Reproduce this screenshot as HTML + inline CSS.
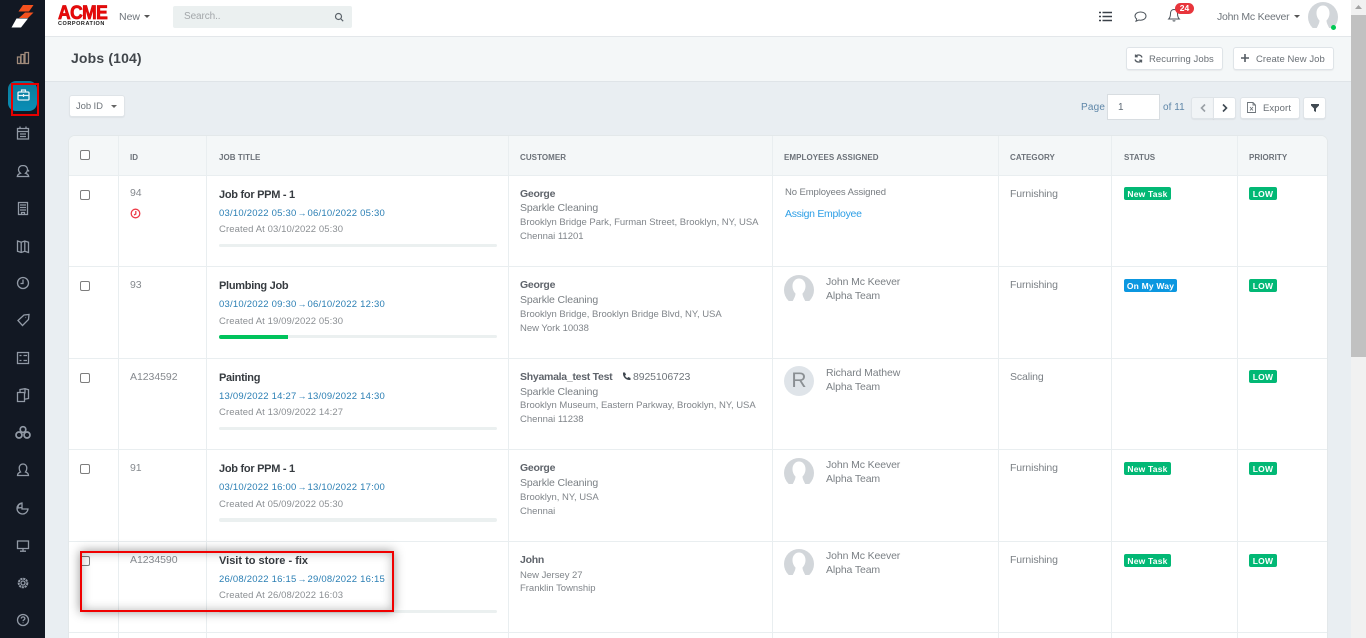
<!DOCTYPE html>
<html lang="en">
<head>
<meta charset="utf-8">
<title>Jobs</title>
<style>
html,body{margin:0;padding:0;width:1366px;height:638px;overflow:hidden;background:#e9eef2;font-family:"Liberation Sans",sans-serif}
#p{position:relative;width:1366px;height:638px;overflow:hidden}
.b{position:absolute}
.t{position:absolute;white-space:nowrap;line-height:14px;font-size:10.5px;letter-spacing:0;color:#7b8085}
.h{font-size:8px;font-weight:bold;letter-spacing:.06px;color:#6c7279}
.id{font-size:10.5px;letter-spacing:-.05px;color:#85898e}
.ti{font-size:11px;font-weight:bold;letter-spacing:-.28px;color:#363b40;margin-top:1px}
.da{font-size:9.5px;letter-spacing:.22px;color:#2b7fb4;margin-top:1px}
.ar{display:inline-block;width:11px;text-align:center;font-style:normal;font-size:9px;letter-spacing:0}
.cr{font-size:9.5px;letter-spacing:.1px;color:#8b8f93;margin-top:1px}
.na{font-size:10.5px;font-weight:bold;letter-spacing:-.27px;color:#5f646b}
.ad{font-size:9.5px;letter-spacing:-.02px;color:#80858a;margin-top:1px}
.co{font-size:10.5px;letter-spacing:-.12px;color:#7b8085}
.bd{position:absolute;height:13px;border-radius:2px;color:#fff;font-size:8.5px;font-weight:bold;line-height:14px;text-align:center;letter-spacing:.2px}
.g{background:#02b875}.bl{background:#0b97e0}
.cb{position:absolute;width:8px;height:8px;border:1px solid #7d7d7d;border-radius:2px;background:#fff}
.vl{position:absolute;top:136px;bottom:0;width:1px;background:#e9eef0}
.hl{position:absolute;left:69px;width:1258px;height:1px;background:#e9eef0}
.pb{position:absolute;left:219px;width:278px;height:3px;background:#ebf0f0;border-radius:2px}
.btn{position:absolute;background:#fff;border:1px solid #dfe4e8;border-radius:3px;box-sizing:border-box;box-shadow:0 1px 1px rgba(0,0,0,.05)}
svg{position:absolute;overflow:visible}
.ic{fill:none;stroke:#929aa6;stroke-width:1.3}
</style>
</head>
<body>
<div id="p">
<!-- main surfaces -->
<div class="b" style="left:45px;top:36px;width:1306px;height:46px;background:#f4f7f8;border-bottom:1px solid #dfe4e8;border-top:1px solid #e3e7ea;box-sizing:border-box"></div>
<div class="b" style="left:45px;top:0;width:1306px;height:37px;background:#fff;border-bottom:1px solid #e3e7ea;box-sizing:border-box"></div>

<!-- table -->
<div class="b" style="left:69px;top:136px;width:1258px;height:510px;background:#fff;border-radius:6px 6px 0 0;box-shadow:0 0 0 1px #e3e8ea"></div>
<div class="b" style="left:69px;top:136px;width:1258px;height:39px;background:#f4f7f8;border-radius:6px 6px 0 0"></div>
<div class="vl" style="left:118px"></div><div class="vl" style="left:206px"></div><div class="vl" style="left:508px"></div><div class="vl" style="left:772px"></div><div class="vl" style="left:998px"></div><div class="vl" style="left:1111px"></div><div class="vl" style="left:1237px"></div>
<div class="hl" style="top:175px"></div><div class="hl" style="top:266px"></div><div class="hl" style="top:358px"></div><div class="hl" style="top:449px"></div><div class="hl" style="top:541px"></div><div class="hl" style="top:632px"></div>

<!-- sidebar -->
<div class="b" style="left:0;top:0;width:45px;height:638px;background:#121823"></div>
<svg style="left:0;top:0" width="45" height="36"><polygon points="23,5 33.500,5 29,11.500 18.500,11.500" fill="#f4511e"/><polygon points="25,12.500 33.500,12.500 28,18 19,18" fill="#f4511e"/><polygon points="16.500,18.500 28,18.500 21,27.500 11.500,27.500" fill="#fff"/></svg>
<svg style="left:0;top:0" width="45" height="638" class="ic">
<path d="M17.500 63.500V57h3v6.500M21 63.500V54.500h3V63.500M25 63.500V52.500h3.500V63.500M17 63.500H29" stroke="#a08a7a"/>
<path d="M17.500 139v-10.500h11V139zM17.500 131.500h11M20 126.500v2.500M26 126.500v2.500M20 134h6M20 136.500h6"/>
<path d="M23 165.500c-3 0-4.500 2-4.500 4 0 1.500 1 3 2 3.800-2 .7-3 1.700-3.200 3.200h11.400c-.2-1.500-1.200-2.500-3.200-3.200 1-.8 2-2.300 2-3.800 0-2-1.500-4-4.500-4zM28 170l1 1.500"/>
<path d="M18.500 202.500h9v12h-9zM20 205h6M20 207.500h6M20 210h6M21.500 214.500v-2h3v2"/>
<path d="M17.500 241l3.700 1.200 3.600-1.200 3.700 1.200v10.300l-3.700-1.200-3.600 1.200-3.700-1.200zM21.200 242.200v10.300M24.800 241v10.300"/>
<circle cx="23" cy="283" r="5.500"/><path d="M23 279.500V283.500H20.500"/>
<path d="M18 320.500l6-5.500 5-.5-.5 5-6 6zM25.500 317.500h.6"/>
<path d="M17.500 352.500h11v11h-11zM19.500 355.500h2M23.500 355.500h3.500M19.500 360.500h2M23.500 360.500h3.500"/>
<path d="M17.500 392.500h7v9h-7zM20 392v-2.500l5-.8 3.500 1V398.500l-4 .8M25 388.500v5"/>
<g stroke-width="1.700"><circle cx="23" cy="429.500" r="2.800"/><circle cx="19" cy="435" r="3"/><circle cx="27" cy="435" r="3"/></g>
<path d="M23 464c-2.500 0-3.800 2-3.800 4 0 1.500.5 3 1.300 4-2 .7-3 1.500-3 3.500h11c0-2-1-2.800-3-3.500.8-1 1.300-2.500 1.300-4 0-2-1.300-4-3.800-4z"/>
<path d="M22 503a5.500 5.500 0 1 0 6 6h-6zM22 503l-3 1.500a5 5 0 0 0-1 3.500l4-.5"/>
<path d="M17.500 541h11v7.500h-11zM23 548.500V551M20 551.200h6"/>
<circle cx="23" cy="583" r="2"/><circle cx="23" cy="583" r="4.300" stroke-dasharray="2.200 .7" stroke-width="2"/>
<circle cx="23" cy="620" r="5.500"/><path d="M21.200 618.500c.2-1 1-1.600 1.900-1.600 1 0 1.800.7 1.800 1.600 0 1.300-1.800 1.300-1.800 2.600M23.100 622.500v.6"/>
</svg>
<div class="b" style="left:8px;top:81px;width:29px;height:30px;border-radius:8px;background:linear-gradient(180deg,#0a7a98,#0a8eb6)"></div>
<svg style="left:17px;top:89px" width="13" height="12"><rect x="1" y="3" width="11" height="8" rx="1" fill="none" stroke="#e8f3f7" stroke-width="1.300"/><path d="M4.500 3V1h4v2M1 6.500h11M6.500 5v3" fill="none" stroke="#e8f3f7" stroke-width="1.200"/></svg>
<div class="b" style="left:11px;top:83px;width:28px;height:33px;border:2px solid #e60000;box-sizing:border-box"></div>

<!-- top bar -->
<div class="t" style="left:58px;top:4px;line-height:20px;font-size:19px;font-weight:bold;color:#ea0a0a;letter-spacing:-.6px;-webkit-text-stroke:.8px #d80a0a;transform:scaleX(.92);transform-origin:left">ACME</div>
<div class="t" style="left:58px;top:21px;line-height:7px;font-size:5.500px;font-weight:bold;color:#1c1c1c;letter-spacing:.55px">CORPORATION</div>
<div class="t" style="left:119px;top:10px;font-size:10.500px;color:#6f757b">New</div>
<svg style="left:144px;top:15px" width="6" height="4"><path d="M0 0h6L3 3z" fill="#555"/></svg>
<div class="b" style="left:173px;top:6px;width:179px;height:22px;background:#ebf0f0;border-radius:2px"></div>
<div class="t" style="left:184px;top:10px;font-size:10px;letter-spacing:-.1px;color:#a3a7aa">Search..</div>
<svg style="left:334px;top:12px" width="10" height="10" fill="none" stroke="#5a6269" stroke-width="1.200"><circle cx="4.500" cy="4.500" r="3"/><path d="M7 7l2.200 2.200"/></svg>
<svg style="left:1099px;top:11px" width="13" height="11" fill="none" stroke="#3a4149" stroke-width="1.500"><path d="M0 1.500h2M3.500 1.500H13M0 5.500h2M3.500 5.500H13M0 9.500h2M3.500 9.500H13"/></svg>
<svg style="left:1134px;top:11px" width="13" height="11" fill="none" stroke="#4d555c"><path d="M6.500 1C3.300 1 1 2.800 1 5c0 1.200.7 2.200 1.700 3L2 10.200 4.800 9c.5.100 1.100.2 1.700.2C9.700 9.200 12 7.300 12 5S9.700 1 6.500 1z"/></svg>
<svg style="left:1168px;top:8px" width="12" height="14" fill="none" stroke="#4d555c"><path d="M6 1.500c-2.500 0-3.500 2-3.500 4 0 3-.8 4.500-1.800 5.500h10.600c-1-1-1.800-2.500-1.800-5.500 0-2-1-4-3.500-4zM4.700 12.500c.6.700 2 .7 2.600 0"/></svg>
<div class="b" style="left:1175px;top:3px;width:19px;height:11px;border-radius:6px;background:#e8353c;color:#fff;font-size:8.500px;font-weight:bold;line-height:11px;text-align:center">24</div>
<div class="t" style="left:1217px;top:10px;font-size:10.500px;letter-spacing:-.25px;color:#6f757b">John Mc Keever</div>
<svg style="left:1294px;top:15px" width="6" height="4"><path d="M0 0h6L3 3z" fill="#555"/></svg>
<svg style="left:1308px;top:2px" width="30" height="30"><circle cx="15" cy="15" r="15" fill="#d2d6da"/><path d="M15 3.500c-3.500 0-6.500 3-6.500 7.500 0 3.500 1.500 6 3 7.500 0 2.500-1.500 5-3 8h13c-1.500-3-3-5.500-3-8 1.500-1.500 3-4 3-7.500 0-4.500-3-7.500-6.500-7.500z" fill="#fff"/><rect x="0" y="26" width="30" height="5" fill="#fff"/></svg>
<div class="b" style="left:1331px;top:25px;width:5px;height:5px;border-radius:50%;background:#00c853"></div>

<!-- page head -->
<div class="t" style="left:71px;top:50px;line-height:16px;font-size:14px;font-weight:bold;letter-spacing:.15px;color:#41464b">Jobs (104)</div>
<div class="btn" style="left:1126px;top:47px;width:97px;height:23px"></div>
<svg style="left:1134px;top:54px" width="9" height="9" fill="none" stroke="#555c63" stroke-width="1.300"><path d="M8 3.500A3.700 3.700 0 0 0 1.500 2.500M1 5.500a3.700 3.700 0 0 0 6.500 1M1.500.5v2.200h2.200M7.500 8.500V6.300H5.300"/></svg>
<div class="t" style="left:1149px;top:53px;font-size:9.500px;letter-spacing:.07px;color:#6a7076">Recurring Jobs</div>
<div class="btn" style="left:1233px;top:47px;width:101px;height:23px"></div>
<svg style="left:1241px;top:54px" width="8" height="8" fill="none" stroke="#555c63" stroke-width="1.600"><path d="M4 0v8M0 4h8"/></svg>
<div class="t" style="left:1256px;top:53px;font-size:9.500px;letter-spacing:.05px;color:#6a7076">Create New Job</div>

<!-- toolbar -->
<div class="btn" style="left:69px;top:95px;width:56px;height:22px"></div>
<div class="t" style="left:76px;top:100px;font-size:9.500px;letter-spacing:-.1px;color:#6f757b">Job ID</div>
<svg style="left:111px;top:105px" width="6" height="4"><path d="M0 0h6L3 3z" fill="#666"/></svg>
<div class="t" style="left:1081px;top:101px;font-size:10px;letter-spacing:.2px;color:#5e86a8">Page</div>
<div class="b" style="left:1107px;top:94px;width:53px;height:26px;background:#fff;border:1px solid #d8dde1;box-sizing:border-box"></div>
<div class="t" style="left:1118px;top:101px;font-size:10px;color:#5e6a75">1</div>
<div class="t" style="left:1163px;top:101px;font-size:10px;letter-spacing:.05px;color:#5e86a8">of 11</div>
<div class="btn" style="left:1191px;top:97px;width:23px;height:22px;background:#f1f4f6;border-radius:3px 0 0 3px"></div>
<div class="btn" style="left:1213px;top:97px;width:23px;height:22px;border-radius:0 3px 3px 0"></div>
<svg style="left:1200px;top:104px" width="6" height="8" fill="none" stroke="#9aa0a6" stroke-width="1.600"><path d="M5 .5L1.500 4 5 7.500"/></svg>
<svg style="left:1222px;top:104px" width="6" height="8" fill="none" stroke="#3e4852" stroke-width="1.600"><path d="M1 .5L4.500 4 1 7.500"/></svg>
<div class="btn" style="left:1240px;top:97px;width:60px;height:22px"></div>
<svg style="left:1247px;top:102px" width="9" height="11" fill="none" stroke="#6d747a" stroke-width=".9"><path d="M.5.500h5.500l2.500 2.500v7.500H.5zM6 .5V3h2.500M3 5l3 3.500M6 5L3 8.500"/></svg>
<div class="t" style="left:1263px;top:102px;font-size:9.500px;letter-spacing:.1px;color:#6a7076">Export</div>
<div class="btn" style="left:1303px;top:97px;width:23px;height:22px"></div>
<svg style="left:1311px;top:104px" width="8" height="8"><path d="M0 0h8v1.500L5 4.500V8L3 7V4.500L0 1.500z" fill="#414a52"/></svg>

<!-- head row -->
<div class="cb" style="left:80px;top:150px"></div>
<div class="t h" style="left:130px;top:151px">ID</div>
<div class="t h" style="left:219px;top:151px">JOB TITLE</div>
<div class="t h" style="left:520px;top:151px">CUSTOMER</div>
<div class="t h" style="left:784px;top:151px">EMPLOYEES ASSIGNED</div>
<div class="t h" style="left:1010px;top:151px">CATEGORY</div>
<div class="t h" style="left:1124px;top:151px">STATUS</div>
<div class="t h" style="left:1249px;top:151px">PRIORITY</div>

<!-- row 1 -->
<div class="cb" style="left:80px;top:190px"></div>
<div class="t id" style="left:130px;top:186px">94</div>
<svg style="left:130px;top:208px" width="11" height="11" fill="none" stroke="#ee3b48" stroke-width="1.300"><circle cx="5.500" cy="5.500" r="4.300"/><path d="M5.800 3v3L4 7"/></svg>
<div class="t ti" style="left:219px;top:187px">Job for PPM - 1</div>
<div class="t da" style="left:219px;top:205px">03/10/2022 05:30<i class="ar">→</i>06/10/2022 05:30</div>
<div class="t cr" style="left:219px;top:222px">Created At 03/10/2022 05:30</div>
<div class="pb" style="top:244px"></div>
<div class="t na" style="left:520px;top:187px">George</div>
<div class="t co" style="left:520px;top:201px">Sparkle Cleaning</div>
<div class="t ad" style="left:520px;top:215px">Brooklyn Bridge Park, Furman Street, Brooklyn, NY, USA</div>
<div class="t ad" style="left:520px;top:229px">Chennai 11201</div>
<div class="t ad" style="left:785px;top:185px;letter-spacing:-.1px;color:#777c81">No Employees Assigned</div>
<div class="t co" style="left:785px;top:207px;letter-spacing:-.3px;color:#2e9fe6">Assign Employee</div>
<div class="t co" style="left:1010px;top:187px">Furnishing</div>
<div class="bd g" style="left:1124px;top:187px;width:47px">New Task</div>
<div class="bd g" style="left:1249px;top:187px;width:28px">LOW</div>

<!-- row 2 -->
<div class="cb" style="left:80px;top:281px"></div>
<div class="t id" style="left:130px;top:278px">93</div>
<div class="t ti" style="left:219px;top:278px">Plumbing Job</div>
<div class="t da" style="left:219px;top:296px">03/10/2022 09:30<i class="ar">→</i>06/10/2022 12:30</div>
<div class="t cr" style="left:219px;top:314px">Created At 19/09/2022 05:30</div>
<div class="pb" style="top:335px"></div>
<div class="b" style="left:219px;top:335px;width:69px;height:4px;background:#00c35c;border-radius:2px 0 0 2px"></div>
<div class="t na" style="left:520px;top:278px">George</div>
<div class="t co" style="left:520px;top:293px">Sparkle Cleaning</div>
<div class="t ad" style="left:520px;top:307px">Brooklyn Bridge, Brooklyn Bridge Blvd, NY, USA</div>
<div class="t ad" style="left:520px;top:321px">New York 10038</div>
<svg style="left:784px;top:275px" width="30" height="30"><circle cx="15" cy="15" r="15" fill="#d2d6da"/><path d="M15 3.500c-3.500 0-6.500 3-6.500 7.500 0 3.500 1.500 6 3 7.500 0 2.500-1.500 5-3 8h13c-1.500-3-3-5.500-3-8 1.500-1.500 3-4 3-7.500 0-4.500-3-7.500-6.500-7.500z" fill="#fff"/><rect x="0" y="26" width="30" height="5" fill="#fff"/></svg>
<div class="t co" style="left:826px;top:275px">John Mc Keever</div>
<div class="t co" style="left:826px;top:289px">Alpha Team</div>
<div class="t co" style="left:1010px;top:278px">Furnishing</div>
<div class="bd bl" style="left:1124px;top:279px;width:53px">On My Way</div>
<div class="bd g" style="left:1249px;top:279px;width:28px">LOW</div>

<!-- row 3 -->
<div class="cb" style="left:80px;top:373px"></div>
<div class="t id" style="left:130px;top:370px">A1234592</div>
<div class="t ti" style="left:219px;top:370px">Painting</div>
<div class="t da" style="left:219px;top:388px">13/09/2022 14:27<i class="ar">→</i>13/09/2022 14:30</div>
<div class="t cr" style="left:219px;top:405px">Created At 13/09/2022 14:27</div>
<div class="pb" style="top:427px"></div>
<div class="t na" style="left:520px;top:370px">Shyamala_test Test</div>
<svg style="left:622px;top:372px" width="9" height="9"><path d="M1 .5l2 0 1 2.200-1 1c.5 1 1.300 1.800 2.300 2.300l1-1 2.200 1v2c-4.500.5-8-3-7.500-7.500z" fill="#3d454d"/></svg>
<div class="t co" style="left:633px;top:370px;color:#6f757b">8925106723</div>
<div class="t co" style="left:520px;top:385px">Sparkle Cleaning</div>
<div class="t ad" style="left:520px;top:398px">Brooklyn Museum, Eastern Parkway, Brooklyn, NY, USA</div>
<div class="t ad" style="left:520px;top:412px">Chennai 11238</div>
<div class="b" style="left:784px;top:366px;width:30px;height:30px;border-radius:50%;background:#dfe4e9;color:#8a8f93;font-size:21px;line-height:30px;text-align:center">R</div>
<div class="t co" style="left:826px;top:366px">Richard Mathew</div>
<div class="t co" style="left:826px;top:380px">Alpha Team</div>
<div class="t co" style="left:1010px;top:370px">Scaling</div>
<div class="bd g" style="left:1249px;top:370px;width:28px">LOW</div>

<!-- row 4 -->
<div class="cb" style="left:80px;top:464px"></div>
<div class="t id" style="left:130px;top:461px">91</div>
<div class="t ti" style="left:219px;top:461px">Job for PPM - 1</div>
<div class="t da" style="left:219px;top:479px">03/10/2022 16:00<i class="ar">→</i>13/10/2022 17:00</div>
<div class="t cr" style="left:219px;top:497px">Created At 05/09/2022 05:30</div>
<div class="pb" style="top:518px;height:4px"></div>
<div class="t na" style="left:520px;top:461px">George</div>
<div class="t co" style="left:520px;top:476px">Sparkle Cleaning</div>
<div class="t ad" style="left:520px;top:490px">Brooklyn, NY, USA</div>
<div class="t ad" style="left:520px;top:504px">Chennai</div>
<svg style="left:784px;top:458px" width="30" height="30"><circle cx="15" cy="15" r="15" fill="#d2d6da"/><path d="M15 3.500c-3.500 0-6.500 3-6.500 7.500 0 3.500 1.500 6 3 7.500 0 2.500-1.500 5-3 8h13c-1.500-3-3-5.500-3-8 1.500-1.500 3-4 3-7.500 0-4.500-3-7.500-6.500-7.500z" fill="#fff"/><rect x="0" y="26" width="30" height="5" fill="#fff"/></svg>
<div class="t co" style="left:826px;top:458px">John Mc Keever</div>
<div class="t co" style="left:826px;top:472px">Alpha Team</div>
<div class="t co" style="left:1010px;top:461px">Furnishing</div>
<div class="bd g" style="left:1124px;top:462px;width:47px">New Task</div>
<div class="bd g" style="left:1249px;top:462px;width:28px">LOW</div>

<!-- row 5 -->
<div class="cb" style="left:80px;top:556px"></div>
<div class="t id" style="left:130px;top:553px">A1234590</div>
<div class="t ti" style="left:219px;top:553px;letter-spacing:0">Visit to store - fix</div>
<div class="t da" style="left:219px;top:571px">26/08/2022 16:15<i class="ar">→</i>29/08/2022 16:15</div>
<div class="t cr" style="left:219px;top:588px">Created At 26/08/2022 16:03</div>
<div class="pb" style="top:610px"></div>
<div class="t na" style="left:520px;top:553px">John</div>
<div class="t ad" style="left:520px;top:568px">New Jersey 27</div>
<div class="t ad" style="left:520px;top:581px">Franklin Township</div>
<svg style="left:784px;top:549px" width="30" height="30"><circle cx="15" cy="15" r="15" fill="#d2d6da"/><path d="M15 3.500c-3.500 0-6.500 3-6.500 7.500 0 3.500 1.500 6 3 7.500 0 2.500-1.500 5-3 8h13c-1.500-3-3-5.500-3-8 1.500-1.500 3-4 3-7.500 0-4.500-3-7.500-6.500-7.500z" fill="#fff"/><rect x="0" y="26" width="30" height="5" fill="#fff"/></svg>
<div class="t co" style="left:826px;top:549px">John Mc Keever</div>
<div class="t co" style="left:826px;top:563px">Alpha Team</div>
<div class="t co" style="left:1010px;top:553px">Furnishing</div>
<div class="bd g" style="left:1124px;top:554px;width:47px">New Task</div>
<div class="bd g" style="left:1249px;top:554px;width:28px">LOW</div>

<!-- annotation -->
<div class="b" style="left:80px;top:551px;width:314px;height:61px;border:2px solid #f00000;box-sizing:border-box;box-shadow:0 0 10px rgba(0,0,0,.42),inset 0 0 10px rgba(0,0,0,.28)"></div>

<!-- scrollbar -->
<div class="b" style="left:1351px;top:0;width:15px;height:638px;background:#f1f1f1"></div>
<div class="b" style="left:1351px;top:15px;width:15px;height:342px;background:#c1c1c1"></div>
<svg style="left:1355px;top:5px" width="8" height="5"><path d="M0 4L3.500 0 7 4z" fill="#a3a3a3"/></svg>
</div>
</body>
</html>
